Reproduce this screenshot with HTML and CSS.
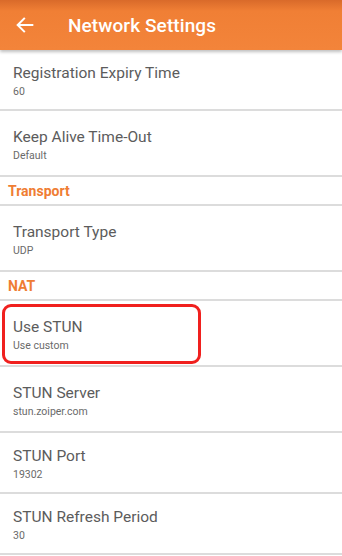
FILE: index.html
```html
<!DOCTYPE html>
<html lang="en">
<head>
  <meta charset="UTF-8" />
  <title>Network Settings</title>
  <link rel="stylesheet" href="styles.css">
</head>
<body>

  <div class="toolbar">
    <svg class="back" width="22" height="22" viewBox="0 0 24 24" aria-label="Back">
      <path d="M20 12H5M11 5l-7 7 7 7" fill="none" stroke="#fff" stroke-width="2.2" stroke-linecap="square"/>
    </svg>
    <h1>Network Settings</h1>
  </div>

  <div class="list">
    <div class="row first">
      <div class="title">Registration Expiry Time</div>
      <div class="value">60</div>
    </div>
    <div class="row">
      <div class="title">Keep Alive Time-Out</div>
      <div class="value">Default</div>
    </div>

    <div class="section">Transport</div>
    <div class="row">
      <div class="title">Transport Type</div>
      <div class="value">UDP</div>
    </div>

    <div class="section">NAT</div>
    <div class="row marked">
      <div class="title">Use STUN</div>
      <div class="value">Use custom</div>
      <div class="highlight"></div>
    </div>
    <div class="row">
      <div class="title">STUN Server</div>
      <div class="value">stun.zoiper.com</div>
    </div>
    <div class="row short">
      <div class="title">STUN Port</div>
      <div class="value">19302</div>
    </div>
    <div class="row short">
      <div class="title">STUN Refresh Period</div>
      <div class="value">30</div>
    </div>
  </div>

</body>
</html>
```

FILE: styles.css
```css
/* Reset */
* {
  margin: 0; padding: 0; box-sizing: border-box;
}
body, html {
  height: 100%;
  font-family: Roboto, 'Noto Sans', sans-serif;
  background: #fff;
  overflow: hidden;
}

/* Barra superior */
.toolbar {
  height: 50px;
  display: flex;
  align-items: center;
  padding-left: 14px;
  background: linear-gradient(to bottom, #d96a2a 0%, #f07f35 22%, #f3843a 100%);
  box-shadow: 0 2px 3px rgba(0,0,0,0.25);
  position: relative;
  z-index: 2;
}
.toolbar .back {
  flex: none;
}
.toolbar h1 {
  margin-left: 32px;
  font-size: 19px;
  font-weight: 500;
  color: #fff;
  letter-spacing: 0.1px;
}

/* Lista */
.list {
  display: flex;
  flex-direction: column;
}
.row {
  height: 66px;
  display: flex;
  flex-direction: column;
  justify-content: center;
  padding: 3px 0 0 13px;
  border-bottom: 2px solid #dcdcdc;
  position: relative;
}
.row.first {
  height: 61px;
}
.row.short {
  height: 61px;
}
.title {
  font-size: 15.5px;
  color: #5c5c5c;
  line-height: 20px;
}
.value {
  font-size: 10.5px;
  color: #6a6a6a;
  line-height: 15px;
  margin-top: 1px;
}

/* Cabecera de sección */
.section {
  height: 29px;
  display: flex;
  align-items: center;
  padding-left: 8px;
  font-size: 14px;
  font-weight: 700;
  color: #ef7d33;
  border-bottom: 2px solid #dcdcdc;
}

/* Marco rojo sobre la fila */
.highlight {
  position: absolute;
  top: 3px;
  left: 2px;
  width: 199px;
  height: 60px;
  border: 3px solid #f0201e;
  border-radius: 9px;
}
```
